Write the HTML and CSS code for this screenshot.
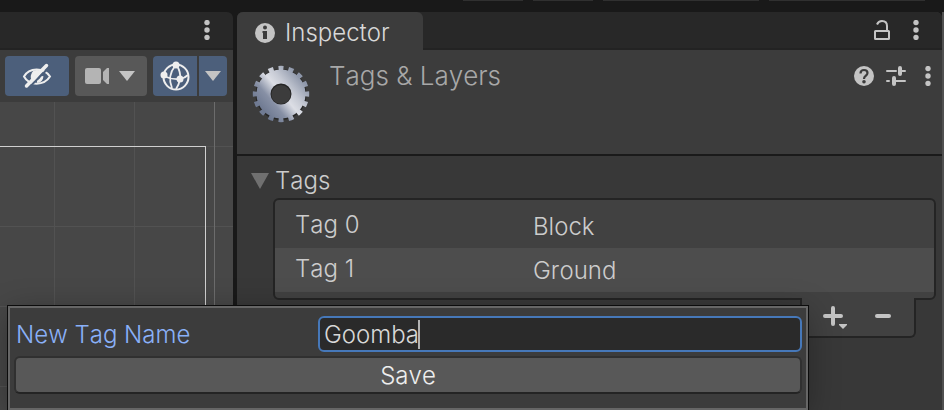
FILE: index.html
```html
<!DOCTYPE html>
<html lang="en">
<head>
<meta charset="utf-8">
<meta name="viewport" content="width=device-width, initial-scale=1">
<title>Inspector</title>
<link rel="stylesheet" href="styles.css">
</head>
<body>
<svg class="sprite" aria-hidden="true">
  <symbol id="dots" viewBox="0 0 6 20">
    <circle cx="3" cy="2.6" r="2.7"/><circle cx="3" cy="10" r="2.7"/><circle cx="3" cy="17.4" r="2.7"/>
  </symbol>
  <symbol id="arrow" viewBox="0 0 16 12"><path d="M0 1h16L8 11z"/></symbol>
</svg>
<div class="editor">
  <div class="strip"><i></i><i></i><i class="wide"></i><i class="wide"></i></div>
  <div class="panes">
    <section class="scene" aria-label="Scene">
      <header class="bar">
        <button class="icon" aria-label="Scene menu"><svg width="6" height="20"><use href="#dots"/></svg></button>
      </header>
      <div class="tools">
        <button class="tool on visibility" aria-label="Scene visibility">
          <svg width="32" height="26" viewBox="0 0 32 26" fill="none" stroke="#eee" stroke-width="2">
            <path d="M3 13.5C8 4 23 4 29 13.5C23 23 8 23 3 13.5z"/>
            <path d="M11 9.500C8.500 14 10 18 13 19L21 8.500C17 6.500 13 6.500 11 9.500z" fill="#eee" stroke="none"/>
            <path d="M21 13q-.500 5-5 5.500" stroke-width="3"/>
            <path d="M8 24.500L28 4.500" stroke="#4c5f7b" stroke-width="2"/>
            <path d="M5.500 23L25.500 2.500" stroke-width="3.500" stroke-linecap="round"/>
          </svg>
        </button>
        <button class="tool camera" aria-label="Camera settings">
          <svg width="24" height="16" viewBox="0 0 24 16" fill="#b4b4b4"><rect width="16" height="16" rx="2"/><path d="M18 4l4-4h2v16h-2l-4-4z"/></svg>
          <svg width="16" height="12"><use href="#arrow"/></svg>
        </button>
        <div class="split">
          <button class="tool on gizmo" aria-label="Gizmos">
            <svg width="30" height="30" viewBox="0 0 30 30" fill="none" stroke="#eee" stroke-width="2">
              <circle cx="16" cy="16" r="12.500"/>
              <path d="M15 5Q7 15 12 27M17 5Q21 11 20 18Q19 24 16 28M4 15Q12 19 20 18Q25 17 28 14" stroke-width="1.800"/>
              <g fill="#eee" stroke="none"><circle cx="16" cy="4" r="3.500"/><circle cx="4" cy="14" r="3.500"/><circle cx="20" cy="18" r="3.500"/></g>
            </svg>
          </button>
          <button class="tool on more" aria-label="Gizmo options"><svg width="16" height="12"><use href="#arrow"/></svg></button>
        </div>
      </div>
      <div class="canvas"><div class="axis"></div><div class="frame"></div></div>
    </section>

    <section class="inspector" aria-label="Inspector">
      <header class="bar tabs">
        <h1 class="tab">
          <svg width="20" height="20" viewBox="0 0 20 20"><circle cx="10" cy="10" r="10" fill="#c4c4c4"/><g fill="#3c3c3c"><circle cx="10" cy="4.500" r="2"/><path d="M7.500 8H12v8H8v-6h-.500z"/></g></svg>
          Inspector
        </h1>
        <div class="actions">
          <button class="icon" aria-label="Lock">
            <svg width="16" height="20" viewBox="0 0 16 20" fill="none" stroke="#c4c4c4" stroke-width="2"><rect x="1" y="11" width="14" height="8" rx=".500"/><path d="M3 4.500Q4.500 1 8 1Q13 1 13 6v5"/></svg>
          </button>
          <button class="icon" aria-label="Inspector menu"><svg width="6" height="20"><use href="#dots"/></svg></button>
        </div>
      </header>
      <div class="title">
        <svg class="gear" width="60" height="60" viewBox="0 0 60 60">
          <defs>
            <linearGradient id="steel" gradientUnits="userSpaceOnUse" x1="12" y1="46" x2="50" y2="14">
              <stop offset="0" stop-color="#6f7a92"/><stop offset=".25" stop-color="#8790a5"/><stop offset=".5" stop-color="#dcdee5"/><stop offset=".68" stop-color="#c6cad4"/><stop offset="1" stop-color="#8e97aa"/>
            </linearGradient>
          </defs>
          <g fill="none">
            <circle cx="30" cy="30.500" r="17.500" stroke="#262626" stroke-width="16"/>
            <g stroke="url(#steel)">
              <circle cx="30" cy="30" r="17.500" stroke-width="14"/>
              <circle cx="30" cy="30" r="26" stroke-width="4.400" pathLength="320" stroke-dasharray="10 10" stroke-dashoffset="5"/>
            </g>
          </g>
        </svg>
        <h2>Tags &amp; Layers</h2>
        <div class="actions">
          <button class="icon" aria-label="Help">
            <svg width="20" height="20" viewBox="0 0 20 20"><circle cx="10" cy="10" r="10" fill="#c4c4c4"/><path d="M6.500 7.500Q6.500 4 10 4t3.500 3Q13.500 8.500 11.500 10Q10 11 10 13" fill="none" stroke="#3c3c3c" stroke-width="2.200"/><circle cx="10" cy="15.800" r="1.800" fill="#3c3c3c"/></svg>
          </button>
          <button class="icon" aria-label="Presets">
            <svg width="20" height="20" viewBox="0 0 20 20" fill="none" stroke="#c4c4c4" stroke-linecap="round"><path d="M1 5h9M15 5h4M1 15h2M9 15h10" stroke-width="2"/><path d="M14 2v6M8 12v6" stroke-width="4"/></svg>
          </button>
          <button class="icon menu" aria-label="Component menu"><svg width="6" height="20"><use href="#dots"/></svg></button>
        </div>
      </div>
      <div class="body">
        <h3><svg width="18" height="16" viewBox="0 0 18 16"><path d="M0 0h18L9 16z" fill="#707070"/></svg>Tags</h3>
        <div class="list">
          <table>
            <tr><th scope="row">Tag 0</th><td>Block</td></tr>
            <tr class="selected"><th scope="row">Tag 1</th><td>Ground</td></tr>
          </table>
        </div>
        <div class="footer">
          <button class="icon" aria-label="Add tag">
            <svg width="24" height="24" viewBox="0 0 24 24"><path d="M10 3v16M2 11h16" stroke="#c4c4c4" stroke-width="4" stroke-linecap="round"/><path d="M16 19h8v1l-4 4-4-4z"/></svg>
          </button>
          <button class="icon" aria-label="Remove tag"><svg width="16" height="24" viewBox="0 0 16 24"><path d="M2 11h12" stroke="#c4c4c4" stroke-width="4" stroke-linecap="round"/></svg></button>
        </div>
      </div>
    </section>
  </div>

  <form class="popup">
    <div class="row">
      <label for="tag-name">New Tag Name</label>
      <div class="field"><input id="tag-name" type="text" value="Goomba"><span class="caret"></span></div>
    </div>
    <button class="save" type="button">Save</button>
  </form>
</div>
</body>
</html>
```

FILE: styles.css
```css
* { box-sizing: border-box; }

body {
  margin: 0;
  background: #191919;
  color: #cccccc;
  font: 300 24px/30px Inter, "Liberation Sans", sans-serif;
  font-kerning: none;
}

h1, h2, h3 { margin: 0; font-size: inherit; font-weight: inherit; }

button {
  margin: 0;
  padding: 0;
  border: 0;
  background: none;
  color: inherit;
  font: inherit;
  font-kerning: none;
}

svg { display: block; flex: none; }
svg:not([fill]) { fill: #c4c4c4; }
.sprite { position: absolute; width: 0; height: 0; }

.editor {
  position: relative;
  display: flex;
  flex-direction: column;
  min-height: 100vh;
  overflow: hidden;
}

.strip {
  display: flex;
  justify-content: flex-end;
  gap: 10px;
  height: 12px;
  padding-right: 19px;
}
.strip i { width: 60px; height: 1px; background: #303030; }
.strip .wide { width: 156px; }

.panes {
  flex: 1;
  display: grid;
  grid-template-columns: 233px 1fr;
  gap: 4px;
  border-right: 2px solid #505050;
}

.bar {
  display: flex;
  align-items: center;
  justify-content: flex-end;
  height: 38px;
  background: #282828;
  border-radius: 0 6px 0 0;
  box-shadow: inset 0 -2px #232323;
}

.scene { display: flex; flex-direction: column; }
.scene .bar { padding: 0 23px 2px; }

.tools {
  display: flex;
  gap: 6px;
  padding: 6px 6px 6px 5px;
  background: #3c3c3c;
}
.tool {
  display: flex;
  align-items: center;
  justify-content: center;
  height: 40px;
  border-radius: 4px;
  background: #585858;
}
.on { background: #4c5f7b; }
.visibility { width: 64px; }
.camera { width: 72px; gap: 10px; padding-right: 2px; }
.split { display: flex; gap: 2px; }
.gizmo { width: 44px; border-radius: 4px 0 0 4px; }
.more { width: 28px; border-radius: 0 4px 4px 0; }

.canvas {
  position: relative;
  flex: 1;
  background:
    linear-gradient(#525252 1px, transparent 1px) 0 44px / 80px 80px,
    linear-gradient(90deg, #525252 1px, transparent 1px) 54px 0 / 80px 80px,
    #474747;
}
.axis {
  position: absolute;
  inset: 0 18px 0 auto;
  width: 1px;
  background: #6c6c6c;
}
.frame {
  position: absolute;
  inset: 44px 27px 0 0;
  border: solid #d0d0d0;
  border-width: 1px 1px 0 0;
}

.inspector { display: flex; flex-direction: column; background: #383838; border-radius: 6px 6px 0 0; }
.tabs { justify-content: space-between; border-radius: 6px 6px 0 0; }
.tab {
  display: flex;
  align-items: center;
  gap: 10px;
  width: 186px;
  height: 38px;
  padding: 4px 18px 0;
  border-radius: 6px 6px 0 0;
  background: #3c3c3c;
  color: #d8d8d8;
}
.actions { display: flex; align-items: center; }
.tabs .actions { gap: 23px; padding: 0 23px 2px 0; }

.title {
  display: flex;
  align-items: flex-start;
  height: 106px;
  padding: 11px 11px 0 14px;
  background: #3c3c3c;
  border-bottom: 2px solid #1a1a1a;
}
.gear { margin-top: 3px; }
.title h2 { flex: 1; padding-left: 18px; color: #a8a8a8; font-size: 26px; }
.title .actions { gap: 12px; height: 30px; }
.menu { margin-left: 7px; }

.body { padding: 10px 6px 0 14px; }
h3 { display: flex; align-items: center; gap: 6px; }

.list {
  margin: 2px 0 0 22px;
  padding: 4px 0 6px;
  border: 2px solid #242424;
  border-radius: 6px;
  background: #414141;
}
table { width: 100%; border-collapse: collapse; table-layout: fixed; }
th, td { height: 44px; padding: 2px 0 0; text-align: left; font-weight: inherit; }
th { width: 258px; padding: 0 0 2px 20px; }
.selected { background: #4d4d4d; }

.footer {
  position: relative;
  display: flex;
  justify-content: space-between;
  width: 116px;
  height: 40px;
  margin: -2px 20px 0 auto;
  padding: 5px 23px 0 21px;
  background: #414141;
  border: solid #242424;
  border-width: 0 2px 2px;
  border-radius: 0 0 6px 6px;
}
.footer .icon { height: 28px; }

.popup {
  position: absolute;
  top: 305px;
  left: 7px;
  right: 135px;
  padding: 8px 4px 14px;
  border: 2px solid #666;
  outline: 1px solid #0c0c0c;
  outline-offset: 0;
  margin: 1px 1px 0;
  background: #3c3c3c;
  box-shadow: 0 6px 30px rgba(0, 0, 0, .3);
}
.row { display: grid; grid-template-columns: 302px 1fr; align-items: center; padding-left: 2px; }
.row label { padding-top: 2px; color: #8ab0f8; }
.field { position: relative; }
input {
  display: block;
  width: 100%;
  height: 36px;
  padding: 0 4px;
  border: 2px solid #4678b9;
  border-radius: 6px;
  outline: 0;
  background: #2a2a2a;
  color: #d8d8d8;
  font: inherit;
  font-kerning: none;
}
.caret {
  position: absolute;
  top: 4px;
  left: 100px;
  width: 2px;
  height: 29px;
  background: #b4b4b4;
}
.save {
  display: block;
  width: 100%;
  height: 38px;
  margin-top: 4px;
  padding-top: 2px;
  border: 2px solid #303030;
  border-bottom-color: #242424;
  border-radius: 6px;
  background: #585858;
  color: #eee;
}
```
